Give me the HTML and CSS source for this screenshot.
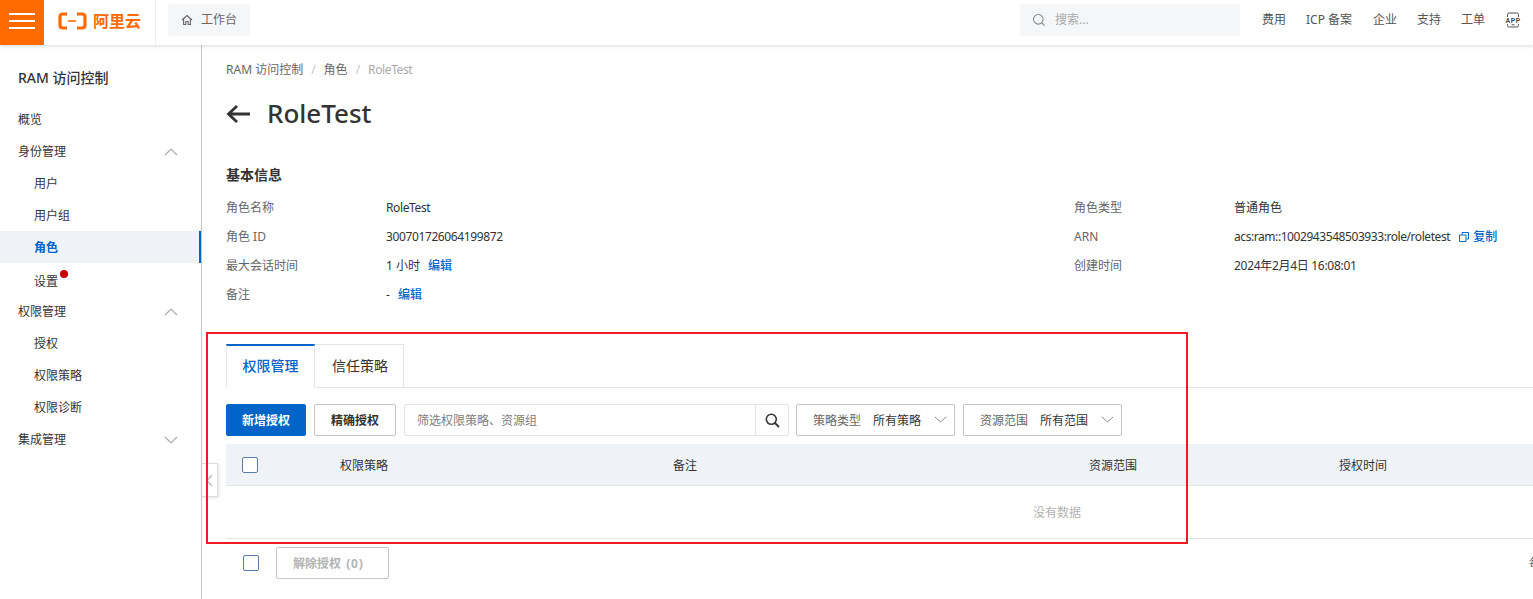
FILE: index.html
```html
<!DOCTYPE html>
<html lang="zh-CN">
<head>
<meta charset="utf-8">
<title>RoleTest</title>
<link rel="stylesheet" href="styles.css">
</head>
<body>
<header class="topbar">
  <button class="burger" aria-label="菜单"><i></i><i></i><i></i></button>
  <div class="logo">
    <svg class="logo-mark" width="30" height="18" viewBox="0 0 30 18"><path d="M9 2H5Q2 2 2 5V13Q2 16 5 16H9M19 2H24Q27 2 27 5V13Q27 16 24 16H19" fill="none" stroke="#ff6a00" stroke-width="3.2"/><path d="M10 9H18" stroke="#ff6a00" stroke-width="1.6"/></svg>
    <span class="logo-text">阿里云</span>
  </div>
  <a class="workbench">
    <svg width="12" height="12" viewBox="0 0 12 12"><path d="M1 6L6 1.5L11 6M2.6 5V10.5H4.8V7.5H7.2V10.5H9.4V5" fill="none" stroke="#666" stroke-width="1.1"/></svg>
    <span>工作台</span>
  </a>
  <div class="grow"></div>
  <div class="search">
    <svg width="14" height="14" viewBox="0 0 14 14"><circle cx="6.3" cy="6.3" r="4.8" fill="none" stroke="#888" stroke-width="1.1"/><path d="M10 10L12.6 12.6" stroke="#888" stroke-width="1.1"/></svg>
    <span>搜索...</span>
  </div>
  <nav class="topnav">
    <a>费用</a><a class="icp">ICP 备案</a><a>企业</a><a>支持</a><a>工单</a>
    <svg class="app" width="18" height="16" viewBox="0 0 18 16"><path d="M3.5 5V2.5Q3.5 1 5 1H13Q14.5 1 14.5 2.5V5M3.5 12V13.5Q3.5 15 5 15H13Q14.5 15 14.5 13.5V12M7.5 12.8H10.5" fill="none" stroke="#555" stroke-width="1"/><text x="9" y="11" text-anchor="middle" class="app-text">APP</text></svg>
  </nav>
</header>
<div class="shell">
  <aside class="sidebar">
    <h2 class="side-title">RAM 访问控制</h2>
    <ul class="menu">
      <li class="item">概览</li>
      <li class="item">身份管理<svg class="chev" width="14" height="8" viewBox="0 0 14 8"><path d="M1 7L7 1L13 7" fill="none" stroke="#aaa" stroke-width="1.2"/></svg></li>
      <li class="item sub">用户</li>
      <li class="item sub">用户组</li>
      <li class="item sub active">角色</li>
      <li class="item sub dotted"><span class="low">设置<i class="dot"></i></span></li>
      <li class="item">权限管理<svg class="chev" width="14" height="8" viewBox="0 0 14 8"><path d="M1 7L7 1L13 7" fill="none" stroke="#aaa" stroke-width="1.2"/></svg></li>
      <li class="item sub">授权</li>
      <li class="item sub">权限策略</li>
      <li class="item sub">权限诊断</li>
      <li class="item">集成管理<svg class="chev" width="14" height="8" viewBox="0 0 14 8"><path d="M1 1L7 7L13 1" fill="none" stroke="#aaa" stroke-width="1.2"/></svg></li>
    </ul>
  </aside>
  <main class="main">
    <div class="crumbs"><a>RAM 访问控制</a><em>/</em><a>角色</a><em>/</em><span class="tight">RoleTest</span></div>
    <div class="title-row">
      <svg width="24" height="20" viewBox="0 0 24 20"><path d="M24 10H2.5M11 2L2.5 10L11 18" fill="none" stroke="#333" stroke-width="2.8"/></svg>
      <h1>RoleTest</h1>
    </div>
    <h3 class="section">基本信息</h3>
    <dl class="info">
      <dt>角色名称</dt><dd class="tight">RoleTest</dd><dt>角色类型</dt><dd>普通角色</dd>
      <dt>角色 ID</dt><dd class="tight">300701726064199872</dd><dt>ARN</dt>
      <dd><span class="tighter">acs:ram::1002943548503933:role/roletest</span><svg class="copy" width="10" height="10" viewBox="0 0 10 10"><path d="M3 2.5V.5H9.5V7H7.5M.5 3H7V9.5H.5Z" fill="none" stroke="#0064c8"/></svg><a class="link">复制</a></dd>
      <dt>最大会话时间</dt><dd>1 小时<a class="link gap">编辑</a></dd><dt>创建时间</dt><dd class="date">2024年2月4日 16:08:01</dd>
      <dt>备注</dt><dd>-<a class="link gap">编辑</a></dd>
    </dl>
    <div class="tabs">
      <a class="tab on">权限管理</a><a class="tab">信任策略</a>
    </div>
    <div class="toolbar">
      <button class="btn primary">新增授权</button>
      <button class="btn">精确授权</button>
      <div class="filter">
        <span class="nudge">筛选权限策略、资源组</span>
        <b><svg width="15" height="15" viewBox="0 0 15 15"><circle cx="6.3" cy="6.3" r="5" fill="none" stroke="#333" stroke-width="1.6"/><path d="M10 10L14 14" stroke="#333" stroke-width="1.8"/></svg></b>
      </div>
      <div class="select"><span class="k nudge">策略类型</span><span class="nudge">所有策略</span><svg width="13" height="7" viewBox="0 0 13 7"><path d="M.8 .8L6.5 6L12.2 .8" fill="none" stroke="#888"/></svg></div>
      <div class="select"><span class="k nudge">资源范围</span><span class="nudge">所有范围</span><svg width="13" height="7" viewBox="0 0 13 7"><path d="M.8 .8L6.5 6L12.2 .8" fill="none" stroke="#888"/></svg></div>
    </div>
    <div class="table">
      <div class="thead">
        <div class="c0"><i class="check"></i></div>
        <div class="c1 nudge">权限策略</div>
        <div class="c2 nudge">备注</div>
        <div class="c3 nudge">资源范围</div>
        <div class="c4 nudge">授权时间</div>
      </div>
      <div class="empty">没有数据</div>
    </div>
    <div class="footer">
      <i class="check"></i>
      <button class="btn ghost">解除授权 <span class="count">(0)</span></button>
      <span class="pager nudge">每页显示</span>
    </div>
  </main>
</div>
<button class="collapse" aria-label="收起"><svg width="7" height="13" viewBox="0 0 7 13"><path d="M6 1L1 6.5L6 12" fill="none" stroke="#bbb" stroke-width="1.4"/></svg></button>
<div class="highlight"></div>
</body>
</html>
```
FILE: styles.css
```css
* { box-sizing: border-box; }
html, body { margin: 0; height: 100%; }
body {
  position: relative;
  height: 599px;
  overflow: hidden;
  background: #fff;
  color: #333;
  font: 12px/18px "Noto Sans", "Noto Sans CJK SC", sans-serif;
}
ul, dl, dd, h1, h2, h3 { margin: 0; padding: 0; }
ul { list-style: none; }
i, em { font-style: normal; }
button { font: inherit; padding: 0; cursor: pointer; }
.tight { letter-spacing: -.38px; }
.tighter { letter-spacing: -.43px; }
.date { letter-spacing: -.3px; }
.nudge { padding-top: 2px; }

/* top bar */
.topbar {
  position: relative;
  z-index: 2;
  display: flex;
  align-items: flex-start;
  height: 45px;
  background: #fff;
  box-shadow: 0 1px 4px rgba(0, 0, 0, .16);
}
.burger {
  flex: none;
  display: flex;
  flex-direction: column;
  justify-content: center;
  gap: 5px;
  width: 44px;
  height: 45px;
  padding: 0 9px 4px;
  border: 0;
  background: #ff6a00;
}
.burger i { display: block; height: 2px; background: #fff; }
.logo {
  flex: none;
  display: flex;
  align-items: center;
  gap: 5px;
  width: 112px;
  height: 45px;
  padding: 0 0 3px 14px;
  border-right: 1px solid #eee;
}
.logo-text { color: #ff6a00; font-size: 16px; font-weight: 700; letter-spacing: 0; }
.workbench {
  display: flex;
  align-items: center;
  gap: 8px;
  height: 32px;
  margin: 4px 0 0 12px;
  padding: 0 13px;
  background: #f5f6f7;
  border-radius: 2px;
  color: #666;
}
.grow { flex: 1; }
.search {
  display: flex;
  align-items: center;
  gap: 9px;
  width: 220px;
  height: 32px;
  margin-top: 4px;
  padding: 0 0 0 12px;
  background: #f5f6f7;
  color: #aaa;
}
.topnav {
  display: flex;
  align-items: center;
  gap: 20px;
  width: 293px;
  height: 32px;
  margin-top: 4px;
  padding-left: 22px;
  color: #555;
}
.topnav a { white-space: nowrap; }
.icp { padding-right: 1px; }
.app { flex: none; margin: 0 0 0 -1px; }
.app-text { font: 700 6.5px "Liberation Sans", sans-serif; letter-spacing: .6px; fill: #444; }

/* shell */
.shell { display: flex; height: 554px; }
.sidebar {
  flex: none;
  width: 202px;
  border-right: 1px solid #c4c6cc;
}
.side-title {
  padding: 24px 18px 0;
  font-size: 14px;
  font-weight: 500;
  line-height: 18px;
}
.menu { margin-top: 16px; }
.item {
  position: relative;
  display: flex;
  align-items: center;
  height: 32px;
  padding: 2px 0 0 18px;
  color: #333;
}
.sub { padding-left: 34px; }
.active {
  background: #eff3f8;
  border-right: 2px solid #0064c8;
  color: #0064c8;
  font-weight: 700;
}
.low { position: relative; top: 2px; }
.dot {
  position: absolute;
  top: -3px;
  left: 26px;
  width: 8px;
  height: 8px;
  border-radius: 50%;
  background: #c80000;
}
.chev { position: absolute; right: 23px; top: 13px; }

/* main */
.main {
  flex: 1;
  min-width: 0;
  overflow: hidden;
  padding: 16px 0 0 24px;
}
.crumbs { display: flex; color: #666; white-space: nowrap; }
.crumbs em { margin: 0 8px; color: #c4c6cc; }
.crumbs span { color: #aaa; }
.title-row {
  display: flex;
  align-items: center;
  gap: 17px;
  height: 36px;
  margin-top: 16px;
}
.title-row svg { flex: none; position: relative; top: 1px; }
.title-row h1 { font-size: 26px; font-weight: 500; line-height: 36px; color: #333; }
.section {
  margin-top: 35px;
  font-size: 14px;
  font-weight: 700;
  line-height: 18px;
}
.info {
  display: grid;
  grid-template-columns: 160px 688px 160px 1fr;
  grid-auto-rows: 29px;
  align-items: center;
  margin-top: 9px;
  white-space: nowrap;
}
.info dt { color: #666; }
.link { color: #0064c8; font-weight: 500; }
.gap { margin-left: 8px; }
.copy { margin: 0 4px 0 9px; vertical-align: -1px; }

.tabs {
  display: flex;
  width: 1307px;
  height: 44px;
  margin-top: 35px;
  border-bottom: 1px solid #e3e4e6;
}
.tab {
  display: flex;
  align-items: center;
  justify-content: center;
  width: 89px;
  height: 44px;
  padding: 0 0 1px 2px;
  border: 1px solid #e3e4e6;
  border-left: 0;
  font-size: 14px;
}
.tab.on {
  padding: 0 0 2px;
  border-top: 2px solid #0064c8;
  border-bottom-color: #fff;
  border-left: 1px solid #e3e4e6;
  color: #0064c8;
  font-weight: 500;
}

.toolbar { display: flex; align-items: center; margin-top: 16px; }
.btn {
  flex: none;
  width: 82px;
  height: 32px;
  margin-left: 8px;
  padding-top: 2px;
  background: #fff;
  border: 1px solid #c4c6cc;
  border-radius: 2px;
  color: #333;
  font-weight: 700;
}
.primary {
  width: 80px;
  margin-left: 0;
  border-color: #0064c8;
  background: #0064c8;
  color: #fff;
}
.filter {
  display: flex;
  align-items: center;
  justify-content: space-between;
  width: 385px;
  height: 32px;
  margin-left: 8px;
  padding-left: 12px;
  border: 1px solid #e3e4e6;
  border-radius: 2px;
  color: #808080;
}
.filter b {
  display: flex;
  align-items: center;
  justify-content: center;
  width: 33px;
  height: 30px;
  border-left: 1px solid #e3e4e6;
}
.select {
  display: flex;
  align-items: center;
  width: 159px;
  height: 32px;
  margin-left: 8px;
  padding-left: 16px;
  border: 1px solid #c4c6cc;
  border-radius: 2px;
  white-space: nowrap;
}
.k { margin-right: 12px; color: #666; }
.select svg { margin: -1px 0 0 13px; }
.filter + .select { margin-left: 7px; }

.table { width: 1662px; margin-top: 8px; }
.thead {
  display: flex;
  align-items: center;
  height: 42px;
  background: #eff3f8;
  border-bottom: 1px solid #e3e4e6;
}
.c0 { display: flex; width: 114px; padding-left: 16px; }
.c1 { width: 333px; }
.c2 { width: 416px; }
.c3 { width: 250px; }
.check {
  display: block;
  flex: none;
  width: 16px;
  height: 16px;
  background: #fff;
  border: 1px solid #5b7ea6;
  border-radius: 2px;
}
.empty {
  height: 53px;
  line-height: 54px;
  text-align: center;
  color: #b3b3b3;
  border-bottom: 1px solid #e3e4e6;
}
.footer { display: flex; align-items: center; margin-top: 8px; white-space: nowrap; }
.footer .check { margin-left: 17px; }
.ghost {
  width: 113px;
  margin-left: 17px;
  padding-left: 16px;
  text-align: left;
  color: #b3b3b3;
}
.count { margin-left: 2px; letter-spacing: .8px; }
.pager { margin-left: 1140px; color: #666; }

/* overlays */
.collapse {
  position: absolute;
  left: 202px;
  top: 463px;
  display: flex;
  align-items: center;
  justify-content: center;
  width: 16px;
  height: 34px;
  background: #fff;
  border: 1px solid #dcdcdc;
  border-left: 0;
  box-shadow: 1px 1px 3px rgba(0, 0, 0, .12);
}
.highlight {
  position: absolute;
  left: 206px;
  top: 332px;
  width: 982px;
  height: 212px;
  border: 2px solid #ed1c24;
  pointer-events: none;
}
```
